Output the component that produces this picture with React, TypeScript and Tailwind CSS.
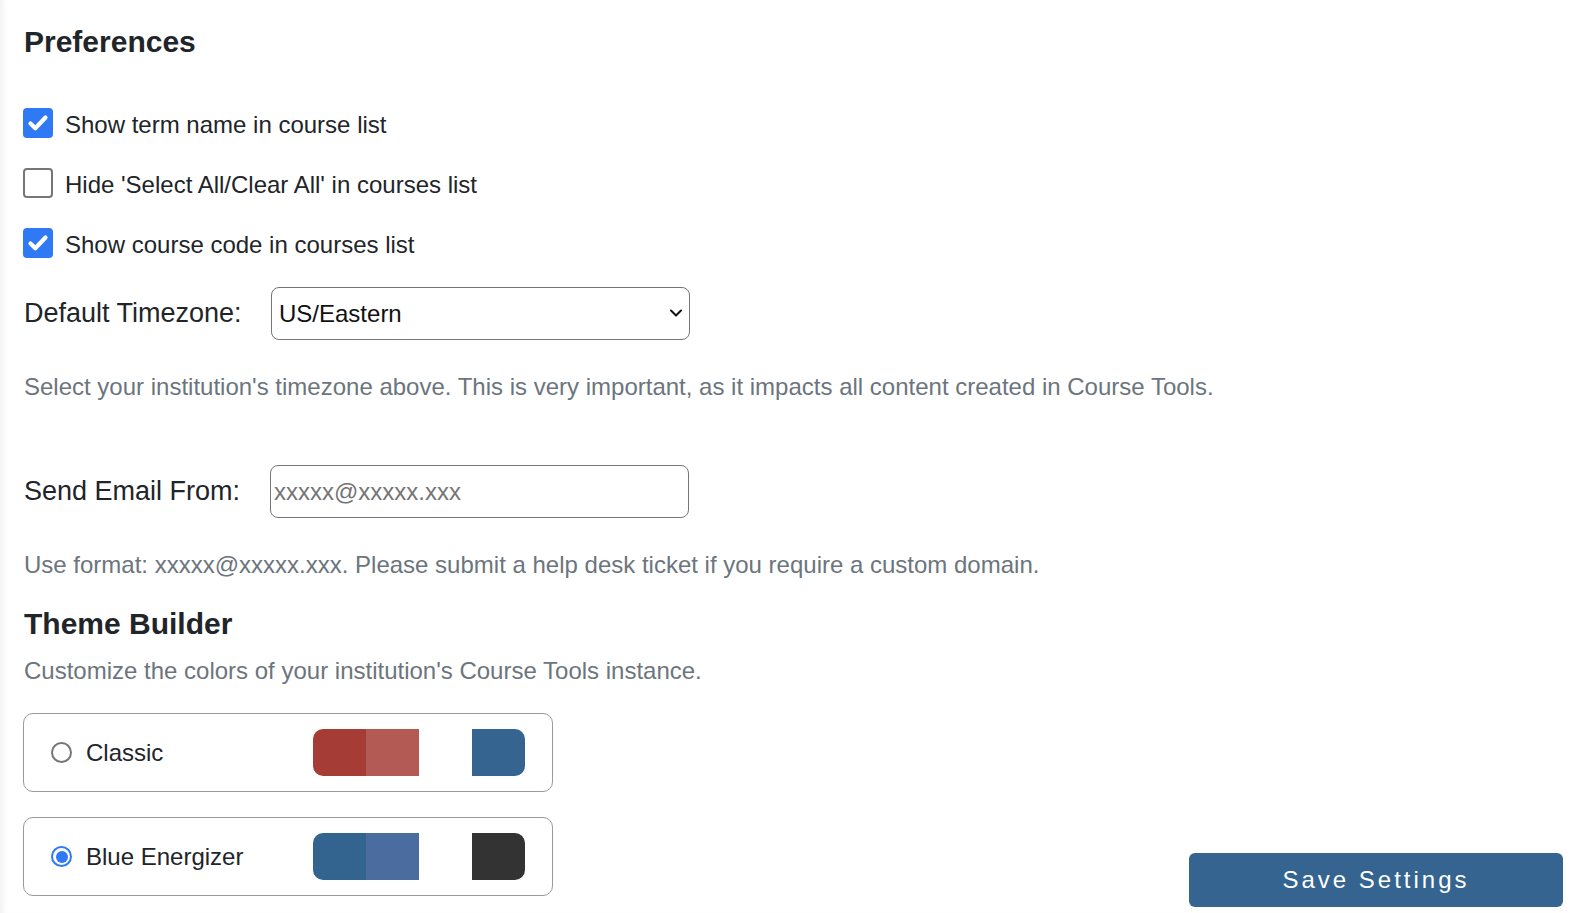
import { useState } from 'react';

const themes = [
  { id: 'classic', name: 'Classic', colors: ['#a63c36', '#b45a55', '#ffffff', '#34648f'] },
  { id: 'blue', name: 'Blue Energizer', colors: ['#33648f', '#4a6c9f', '#ffffff', '#333333'] },
];

function Checkbox({ checked, onChange, label }: { checked: boolean; onChange: () => void; label: string }) {
  return (
    <label className="flex h-[30px] items-center gap-[12px] cursor-pointer" onClick={onChange}>
      {checked ? (
        <span className="flex h-[30px] w-[30px] items-center justify-center rounded-[4px] bg-[#3079f5]">
          <svg width="24" height="24" viewBox="0 0 24 24" fill="none">
            <path d="M4.5 12.5l4.8 4.8L19.5 6.5" stroke="white" strokeWidth="4.2" strokeLinecap="round" strokeLinejoin="round" />
          </svg>
        </span>
      ) : (
        <span className="h-[30px] w-[30px] rounded-[4px] border-2 border-[#767676] bg-white" />
      )}
      <span className="mt-[4px] text-[24px] text-[#212529]">{label}</span>
    </label>
  );
}

function Radio({ checked }: { checked: boolean }) {
  return checked ? (
    <span className="flex h-[21px] w-[21px] items-center justify-center rounded-full border-[2px] border-[#3079f5] bg-white">
      <span className="h-[12px] w-[12px] rounded-full bg-[#3079f5]" />
    </span>
  ) : (
    <span className="h-[21px] w-[21px] rounded-full border-[2px] border-[#767676] bg-white" />
  );
}

export default function App() {
  const [showTerm, setShowTerm] = useState(true);
  const [hideSelect, setHideSelect] = useState(false);
  const [showCode, setShowCode] = useState(true);
  const [theme, setTheme] = useState('blue');

  return (
    <div className="min-h-screen bg-white font-['Liberation_Sans',Arial,sans-serif] text-[#212529] shadow-[inset_7px_0_7px_-5px_rgba(0,0,0,0.07)]">
      <div className="flex flex-col pl-[23px] pt-[24px]">
        <h2 className="ml-px text-[30px] font-bold leading-[36px]">Preferences</h2>

        <div className="mt-[48px] flex flex-col gap-[30px]">
          <Checkbox checked={showTerm} onChange={() => setShowTerm(!showTerm)} label="Show term name in course list" />
          <Checkbox checked={hideSelect} onChange={() => setHideSelect(!hideSelect)} label="Hide 'Select All/Clear All' in courses list" />
          <Checkbox checked={showCode} onChange={() => setShowCode(!showCode)} label="Show course code in courses list" />
        </div>

        <div className="ml-px mt-[29px] flex items-center">
          <span className="w-[247px] text-[27px]">Default Timezone:</span>
          <div className="relative h-[53px] w-[419px]">
            <select
              defaultValue="US/Eastern"
              className="h-full w-full appearance-none rounded-[8px] border border-[#767676] bg-white pl-[7px] text-[24px] text-[#111] outline-none"
            >
              <option>US/Eastern</option>
              <option>US/Central</option>
              <option>US/Mountain</option>
              <option>US/Pacific</option>
            </select>
            <svg className="pointer-events-none absolute right-[7px] top-[20px]" width="14" height="12" viewBox="0 0 14 12" fill="none">
              <path d="M2 3.5l5 5 5-5" stroke="#111" strokeWidth="2" strokeLinecap="round" strokeLinejoin="round" />
            </svg>
          </div>
        </div>

        <p className="ml-px mt-[29px] text-[24px] leading-[36px] text-[#6c757d]">
          Select your institution's timezone above. This is very important, as it impacts all content created in Course Tools.
        </p>

        <div className="ml-px mt-[60px] flex items-center">
          <span className="w-[246px] text-[27px]">Send Email From:</span>
          <input
            type="text"
            placeholder="xxxxx@xxxxx.xxx"
            className="h-[53px] w-[419px] rounded-[8px] border border-[#767676] bg-white pl-[3px] text-[24px] outline-none placeholder:text-[#757575]"
          />
        </div>

        <p className="ml-px mt-[29px] text-[24px] leading-[36px] text-[#6c757d]">
          Use format: xxxxx@xxxxx.xxx. Please submit a help desk ticket if you require a custom domain.
        </p>

        <h2 className="ml-px mt-[23px] text-[30px] font-bold leading-[36px]">Theme Builder</h2>
        <p className="ml-px mt-[11px] text-[24px] leading-[36px] text-[#6c757d]">
          Customize the colors of your institution's Course Tools instance.
        </p>

        <div className="mt-[24px] flex flex-col gap-[25px]">
          {themes.map((t) => (
            <div
              key={t.id}
              onClick={() => setTheme(t.id)}
              className="flex h-[79px] w-[530px] cursor-pointer items-center rounded-[10px] border border-[#9a9a9a] pl-[27px] pr-[27px]"
            >
              <Radio checked={theme === t.id} />
              <span className="ml-[14px] text-[24px]">{t.name}</span>
              <div className="ml-auto flex h-[47px] overflow-hidden rounded-[10px]">
                {t.colors.map((c, i) => (
                  <span key={i} className="h-full w-[53px]" style={{ backgroundColor: c }} />
                ))}
              </div>
            </div>
          ))}
        </div>
      </div>

      <button className="fixed bottom-[6px] right-[7px] h-[54px] w-[374px] rounded-[6px] bg-[#34648f] text-[24px] tracking-[3px] text-white">
        Save Settings
      </button>
    </div>
  );
}
